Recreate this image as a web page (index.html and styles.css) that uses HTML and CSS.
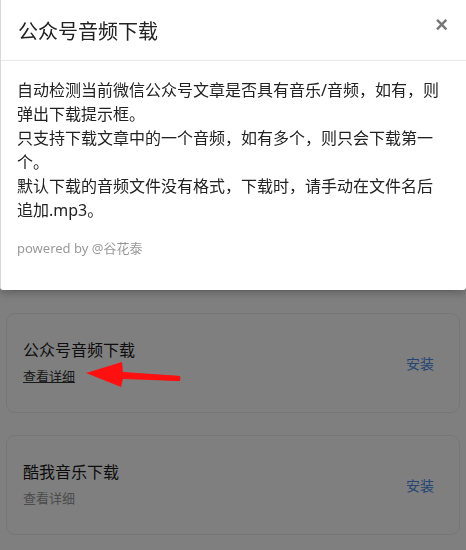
FILE: index.html
```html
<!DOCTYPE html>
<html lang="zh-CN">
<head>
  <meta charset="UTF-8">
  <meta name="viewport" content="width=device-width, initial-scale=1.0">
  <title>脚本列表</title>
  <link rel="stylesheet" href="styles.css">
</head>
<body>
  <ul class="script-list">
    <li class="script-item">
      <div class="script-info">
        <div class="script-name">微信读书助手</div>
        <a class="script-detail">查看详细</a>
      </div>
      <span class="script-install">安装</span>
    </li>
    <li class="script-item">
      <div class="script-info">
        <div class="script-name">网页视频下载</div>
        <a class="script-detail">查看详细</a>
      </div>
      <span class="script-install">安装</span>
    </li>
    <li class="script-item">
      <div class="script-info">
        <div class="script-name">公众号音频下载</div>
        <a class="script-detail script-detail-active">查看详细</a>
      </div>
      <span class="script-install">安装</span>
    </li>
    <li class="script-item">
      <div class="script-info">
        <div class="script-name">酷我音乐下载</div>
        <a class="script-detail">查看详细</a>
      </div>
      <span class="script-install">安装</span>
    </li>
  </ul>

  <!-- 遮罩 -->
  <div class="mask"></div>

  <div class="modal">
    <div class="modal-header">
      <h4 class="modal-title">公众号音频下载</h4>
      <span class="modal-close">&times;</span>
    </div>
    <div class="modal-body">
      <p class="modal-desc">自动检测当前微信公众号文章是否具有音乐/音频，如有，则弹出下载提示框。<br>只支持下载文章中的一个音频，如有多个，则只会下载第一个。<br>默认下载的音频文件没有格式，下载时，请手动在文件名后追加.mp3。</p>
      <p class="modal-author">powered by @谷花泰</p>
    </div>
  </div>

  <!-- 标注箭头 -->
  <svg class="mark-arrow" width="100" height="30" viewBox="0 0 100 30">
    <polygon points="0,11 36,0 37,10 94,14 94,19 37,17 35,25" fill="#ff1010"/>
    <line x1="36" y1="13" x2="92" y2="16.5" stroke="#ff1010" stroke-width="5" stroke-linecap="round"/>
  </svg>
</body>
</html>
```

FILE: styles.css
```css
html, body {
  margin: 0;
  padding: 0;
  height: 100%;
}
body {
  position: relative;
  background: #fff;
  color: #222;
  font-family: "Noto Sans", "Noto Sans CJK SC", sans-serif;
}
.script-list {
  margin: 0;
  padding: 69px 6px 0;
  list-style-type: none;
  display: flex;
  flex-direction: column;
  gap: 22px;
}
.script-item {
  display: flex;
  align-items: center;
  justify-content: space-between;
  box-sizing: border-box;
  height: 100px;
  padding: 0 25px 0 16px;
  border: 1px solid #ececec;
  border-radius: 9px;
}
.script-info {
  display: flex;
  flex-direction: column;
  padding-bottom: 2px;
}
.script-name {
  font-size: 16px;
  line-height: 24px;
  color: #1a1a1a;
}
.script-detail {
  margin-top: 4px;
  font-size: 13px;
  line-height: 20px;
  color: #999;
}
.script-detail-active {
  color: #333;
  text-decoration: underline;
}
.script-install {
  font-size: 14px;
  color: #4a8ce8;
}
.mask {
  position: fixed;
  top: 0;
  left: 0;
  right: 0;
  bottom: 0;
  background: rgba(0, 0, 0, .5);
}
.modal {
  position: absolute;
  top: 0;
  left: 0;
  right: 0;
  background: #fff;
  border-left: 1px solid #d8d8d8;
  border-radius: 0 0 3px 3px;
  box-shadow: 0 3px 8px rgba(0, 0, 0, .25);
}
.modal-header {
  display: flex;
  align-items: center;
  justify-content: space-between;
  height: 60px;
  padding: 0 18px 0 17px;
  border-bottom: 1px solid #e8e8e8;
}
.modal-title {
  margin: 0;
  font-size: 20px;
  font-weight: normal;
  color: #222;
}
.modal-close {
  margin-top: -10px;
  font-family: "Liberation Sans", sans-serif;
  font-size: 22px;
  font-weight: bold;
  color: #777;
}
.modal-body {
  padding: 17px 20px 32px 16px;
}
.modal-desc {
  margin: 0;
  font-size: 16px;
  line-height: 24px;
  color: #222;
}
.modal-author {
  margin: 16px 0 0;
  font-size: 13px;
  line-height: 20px;
  color: #999;
}
.mark-arrow {
  position: absolute;
  left: 86px;
  top: 362px;
}
```
